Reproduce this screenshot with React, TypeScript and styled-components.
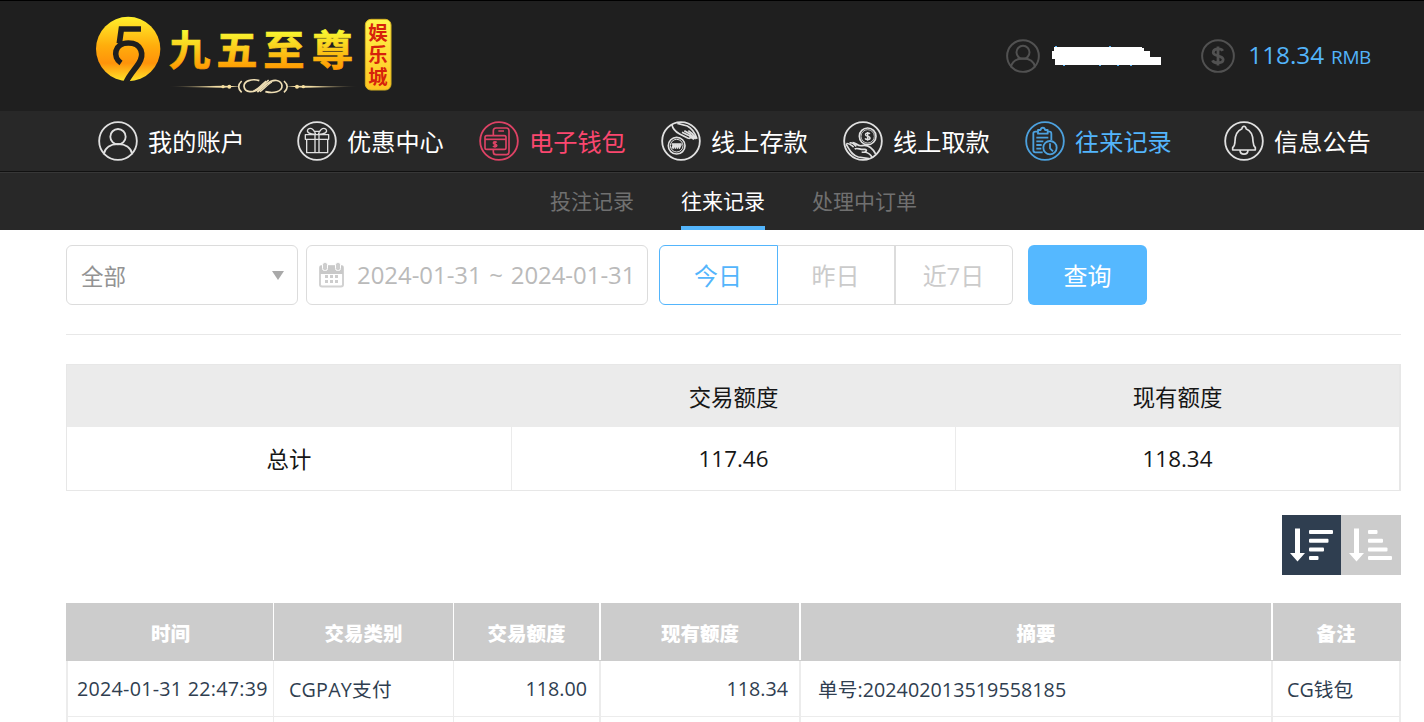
import React from "react";
import styled, { createGlobalStyle } from "styled-components";

const GlobalStyle = createGlobalStyle`
  * { box-sizing: border-box; }
  html, body { margin: 0; padding: 0; background: #fff; overflow: hidden; }
  body { font-family: "Open Sans", "Noto Sans CJK SC", sans-serif; color: #1c1c1c; }
  button { font-family: inherit; cursor: pointer; }
`;

const Page = styled.div`
  width: 1424px;
  height: 722px;
  overflow: hidden;
`;

const Header = styled.header`
  height: 111px;
  background: #1f1f1f;
  border-top: 1px solid #000;
  display: flex;
  justify-content: space-between;
  padding: 0 53px 0 80px;
`;

const LogoSvg = styled.svg`
  display: block;
  margin-top: -1px;
  flex: none;
`;

const Account = styled.div`
  display: flex;
  align-items: center;
  height: 110px;
`;

const AccountIcon = styled.svg`
  width: 34px;
  height: 34px;
  color: #515151;
  flex: none;
`;

const UserName = styled.svg`
  margin: 0 40px 0 12px;
  flex: none;
`;

const Balance = styled.div`
  margin-left: 13px;
  color: #53b4fa;
  font-size: 24.3px;
  line-height: 34px;
  white-space: nowrap;
`;

const Currency = styled.span`
  font-size: 19px;
  letter-spacing: -0.4px;
  margin-left: 7px;
`;

const MainNav = styled.nav`
  height: 60px;
  background: #282828;
  display: grid;
  grid-template-columns: 199px 182px 182px 182px 182px 199px auto;
  align-items: center;
  padding-left: 98px;
`;

const NavItem = styled.a<{ $color?: string }>`
  display: flex;
  align-items: center;
  gap: 10px;
  color: ${(p) => p.$color || "#fff"};
  font-size: 24.2px;
  line-height: 36px;
  white-space: nowrap;
`;

const NavLabel = styled.span`
  padding-top: 2px;
`;

const NavIconSvg = styled.svg`
  width: 40px;
  height: 40px;
  flex: none;
  opacity: 0.86;
`;

const SubNav = styled.nav`
  height: 59px;
  background: #282828;
  border-top: 1px solid #111;
  box-shadow: inset 0 1px 0 #373737;
  display: flex;
  gap: 47px;
  padding-left: 550px;
`;

const SubItem = styled.a<{ $active?: boolean }>`
  height: 58px;
  font-size: 21px;
  line-height: 59px;
  white-space: nowrap;
  color: ${(p) => (p.$active ? "#fff" : "#707070")};
  border-bottom: 4px solid ${(p) => (p.$active ? "#53b5fc" : "transparent")};
`;

const Content = styled.main`
  padding: 15px 23px 0 66px;
`;

const Filters = styled.div`
  display: flex;
  height: 90px;
  border-bottom: 1px solid #e8e8e8;
`;

const SelectBox = styled.div`
  width: 232px;
  height: 60px;
  border: 1px solid #dcdcdc;
  border-radius: 6px;
  display: flex;
  align-items: center;
  justify-content: space-between;
  padding: 0 13px 0 14px;
  font-size: 22.5px;
  color: #939393;
`;

const Caret = styled.i`
  border: 6px solid transparent;
  border-top: 9px solid #a9a9a9;
  border-bottom: 0;
`;

const DateBox = styled.div`
  width: 342px;
  height: 60px;
  margin-left: 8px;
  border: 1px solid #dcdcdc;
  border-radius: 6px;
  display: flex;
  align-items: center;
  padding: 0 0 1px 12px;
  gap: 13px;
  font-size: 23.9px;
  word-spacing: 1.5px;
  color: #bababa;
  white-space: nowrap;
`;

const RangeGroup = styled.div`
  display: flex;
  margin: 0 15px 0 11px;
`;

const RangeButton = styled.button<{ $active?: boolean; $w: number }>`
  width: ${(p) => p.$w}px;
  height: 60px;
  padding: 0 1px 1px 0;
  background: #fff;
  font-size: 24px;
  color: ${(p) => (p.$active ? "#53b5fc" : "#cbcbcb")};
  border: 1px solid ${(p) => (p.$active ? "#53b5fc" : "#dcdcdc")};
  border-left-width: ${(p) => (p.$active ? 1 : 0)}px;
  &:first-child { border-radius: 6px 0 0 6px; }
  &:nth-child(2) { border-right-width: 2px; }
  &:last-child { border-radius: 0 6px 6px 0; }
`;

const QueryButton = styled.button`
  width: 119px;
  height: 60px;
  padding: 0 0 1px;
  border: 0;
  border-radius: 6px;
  background: #55b8ff;
  color: #fff;
  font-size: 24px;
`;

const Summary = styled.section`
  margin-top: 29px;
  height: 127px;
  border: 1px solid #e7e7e7;
  border-right-width: 2px;
  font-size: 22.4px;
  color: #161616;
`;

const SummaryRow = styled.div<{ $head?: boolean }>`
  display: grid;
  grid-template-columns: 445px 444px 1fr;
  height: ${(p) => (p.$head ? 62 : 63)}px;
  background: ${(p) => (p.$head ? "#ebebeb" : "#fff")};
`;

const SummaryCell = styled.div`
  display: flex;
  align-items: center;
  justify-content: center;
  border-right: 1px solid #ebebeb;
  &:last-child { border-right: 0; }
`;

const SortBar = styled.div`
  display: flex;
  justify-content: flex-end;
  margin: 24px 0 28px;
`;

const SortButton = styled.button<{ $active?: boolean }>`
  width: ${(p) => (p.$active ? 59 : 60)}px;
  height: 60px;
  padding: 0;
  border: 0;
  background: ${(p) => (p.$active ? "#2f3e50" : "#ccc")};
  display: flex;
`;

const Records = styled.section`
  border-left: 2px solid #ececec;
  border-right: 2px solid #ececec;
`;

const recordColumns = "206px 180px 147px 200px 472px 1fr";

const RecordHead = styled.div`
  display: grid;
  grid-template-columns: ${recordColumns};
  height: 58px;
  margin: 0 -2px;
  padding: 0 2px;
  background: #ccc;
  color: #fff;
  font-size: 19.5px;
  font-weight: 900;
`;

const HeadCell = styled.div<{ $line?: number }>`
  display: flex;
  align-items: center;
  justify-content: center;
  padding: 1px 0 0;
  border-right: ${(p) => p.$line || 0}px solid #fff;
  height: 57px;
`;

const RecordRow = styled.div`
  display: grid;
  grid-template-columns: ${recordColumns};
  height: 56px;
  border-bottom: 1px solid #ececec;
  color: #2f3e50;
  font-size: 19.7px;
`;

const Cell = styled.div<{ $line?: number; $right?: boolean; $pad: number; $track?: number }>`
  display: flex;
  align-items: center;
  justify-content: ${(p) => (p.$right ? "flex-end" : "flex-start")};
  padding: ${(p) => (p.$right ? `0 ${p.$pad}px 1px 0` : `0 0 1px ${p.$pad}px`)};
  border-right: ${(p) => p.$line || 0}px solid #ececec;
  letter-spacing: ${(p) => p.$track || 0}px;
  white-space: nowrap;
`;

function Logo() {
  return (
    <LogoSvg width="330" height="110" viewBox="0 0 990 330">
      <defs>
        <linearGradient id="disc" x1="0" y1="0" x2="0" y2="1">
          <stop offset="0" stopColor="#fff02c" />
          <stop offset=".45" stopColor="#ffad0c" />
          <stop offset=".72" stopColor="#ff930a" />
          <stop offset="1" stopColor="#ffe52b" />
        </linearGradient>
        <linearGradient id="gold" x1="0" y1="85" x2="0" y2="210" gradientUnits="userSpaceOnUse">
          <stop offset="0" stopColor="#f7ff35" />
          <stop offset="1" stopColor="#ff9700" />
        </linearGradient>
        <linearGradient id="seal" x1="0" y1="0" x2="0" y2="1">
          <stop offset="0" stopColor="#fff64d" />
          <stop offset="1" stopColor="#ffc320" />
        </linearGradient>
        <linearGradient id="rule" x1="265" x2="835" y1="0" y2="0" gradientUnits="userSpaceOnUse">
          <stop offset="0" stopColor="#e9cf8c" stopOpacity="0" />
          <stop offset=".25" stopColor="#f2dda5" />
          <stop offset=".75" stopColor="#f2dda5" />
          <stop offset="1" stopColor="#e9cf8c" stopOpacity="0" />
        </linearGradient>
      </defs>
      <circle cx="144.500" cy="147" r="96.500" fill="url(#disc)" />
      <g fill="none" stroke="#1f1f1f">
        <path d="M183 87H124L118 130" strokeWidth="17" />
        <path d="M123 189C97 172 102 129 145 129C187 129 193 165 176 191C163 211 147 226 138 248" strokeWidth="17" />
      </g>
      <g fill="url(#gold)" fontFamily="'Noto Sans CJK SC', sans-serif" fontSize="124" fontWeight="700" stroke="url(#gold)" strokeWidth="2">
        <text x="267" y="195">九</text>
        <text x="409" y="195">五</text>
        <text x="550" y="195">至</text>
        <text x="695" y="195">尊</text>
      </g>
      <path d="M265 260 430 257 482 259 430 263ZM618 259 670 257 835 260 670 263Z" fill="url(#rule)" />
      <g fill="#f6df9f">
        <circle cx="429" cy="260" r="5" /><circle cx="448" cy="260" r="6" />
        <circle cx="651" cy="260" r="6" /><circle cx="670" cy="260" r="5" />
      </g>
      <g fill="none" stroke="#efdfb5" strokeWidth="5">
        <path d="M485 243Q467 260 485 277M612 243Q631 260 612 277" />
        <path d="M538 242C516 235 491 243 492 259C494 278 521 281 541 263L566 240" />
        <path d="M556 275C580 281 607 276 606 257C604 240 581 234 560 252L532 276" />
        <path d="M520 272C533 271 548 251 558 243M540 275C551 268 565 251 576 246" strokeWidth="4" />
      </g>
      <rect x="856" y="58" width="77" height="212" rx="17" fill="url(#seal)" stroke="#d7b322" strokeWidth="3" />
      <text fill="#d6220c" fontFamily="'Noto Sans CJK SC', sans-serif" fontSize="58" fontWeight="700">
        <tspan x="865" y="119">娱</tspan>
        <tspan x="865" y="187">乐</tspan>
        <tspan x="865" y="253">城</tspan>
      </text>
    </LogoSvg>
  );
}

const DOLLAR = "M12-13C8-20-12-20-12-9C-12 2 13-3 13 9C13 20-10 20-14 11M0-24V24";

const icons: Record<string, React.ReactNode> = {
  user: (
    <>
      <circle cx="60" cy="47" r="23" />
      <path d="M17 100C21 79 39 69 60 69S99 79 103 100" />
    </>
  ),
  gift: (
    <g strokeWidth="4">
      <path d="M25 41H95V55H25ZM29 55V95H92V55M54 41V95M66 41V95" />
      <path d="M56 40C37 40 27 33 33 25C43 17 54 29 56 40ZM64 40C83 40 93 33 87 25C77 17 66 29 64 40ZM50 31H70" />
    </g>
  ),
  wallet: (
    <g strokeWidth="5">
      <path d="M43 43V29Q43 21 51 21H82Q90 21 90 29V93Q90 101 82 101H51Q43 101 43 93V86M58 30H75" />
      <rect x="18" y="44" width="63" height="41" rx="5" />
      <path d="M18 55H81" />
      <path d={DOLLAR} transform="translate(48 70) scale(.42)" strokeWidth="11" />
    </g>
  ),
  deposit: (
    <g strokeWidth="5">
      <circle cx="47" cy="74" r="25" />
      <circle cx="47" cy="74" r="19" strokeWidth="3" />
      <path d="M33 82 37 69V82L43 69V82L49 69V82L55 69V82L61 70M32 69H62" strokeWidth="4" />
      <path d="M32 9C35 23 42 32 56 39L80 51C91 55 91 45 80 42L63 34M49 7 79 15C95 23 103 39 108 53M70 29 87 39 101 54M82 29 94 38 106 54M88 48 99 55" />
    </g>
  ),
  withdraw: (
    <g strokeWidth="5">
      <circle cx="74" cy="46" r="25" />
      <circle cx="74" cy="46" r="20" strokeWidth="2.500" />
      <path d={DOLLAR} transform="translate(74 46) scale(.55)" strokeWidth="8" />
      <path d="M9 70C20 85 24 102 46 108L78 113M10 68C18 65 24 72 32 78M20 66C26 62 34 70 40 76M29 65C38 64 44 77 57 74C78 70 92 88 98 99M35 84C43 79 52 87 65 85C75 86 70 96 56 93M66 93C78 96 84 102 87 109" />
    </g>
  ),
  records: (
    <g strokeWidth="5.500">
      <path d="M53 94H31Q25 94 25 88V37Q25 32 31 32H38M67 32H74Q79 32 79 38V57" />
      <path d="M39 38V27H47C48 18 59 18 60 27H68V38ZM34 50H70M34 61H55M34 72H50M34 83H49" />
      <circle cx="75" cy="80" r="20" />
      <path d="M75 67V82L84 91" />
    </g>
  ),
  bell: (
    <g strokeWidth="5">
      <path d="M54 23C53 14 67 14 66 23C81 29 87 42 87 61Q88 74 94 80V87H26V80Q33 74 33 61C33 42 40 29 54 23ZM48 88C49 103 71 103 72 88" />
    </g>
  ),
};

function NavIcon({ name }: { name: string }) {
  return (
    <NavIconSvg viewBox="0 0 120 120" fill="none" stroke="currentColor" strokeWidth="5.500" strokeLinejoin="round">
      <circle cx="60" cy="60" r="56.500" />
      {icons[name]}
    </NavIconSvg>
  );
}

function CalendarIcon() {
  return (
    <svg width="25" height="26" viewBox="0 0 25 26">
      <rect x="1" y="4" width="23" height="20.500" rx="2" fill="#fff" stroke="#d2d2d2" strokeWidth="2" />
      <path d="M1 4H24V12H1Z" fill="#c9c9c9" />
      <g fill="#cecece" stroke="#fff">
        <rect x="3.500" y=".5" width="5" height="8" rx="2" />
        <rect x="16.500" y=".5" width="5" height="8" rx="2" />
      </g>
      <path d="M6 14.500H9M11 14.500H14M16 14.500H19M6 19.500H9M11 19.500H14M16 19.500H19" stroke="#cdcdcd" strokeWidth="3" />
    </svg>
  );
}

function SortIcon({ widths }: { widths: number[] }) {
  return (
    <svg width="59" height="60" viewBox="0 0 59 60" fill="#fff">
      <path d="M13 13.500H18V38H23L15.500 46.500 8 38H13Z" />
      {widths.map((w, i) => (
        <rect key={i} x="27" y={15 + i * 8.700} width={w} height="4" rx="1" />
      ))}
    </svg>
  );
}

const navItems = [
  { icon: "user", label: "我的账户" },
  { icon: "gift", label: "优惠中心" },
  { icon: "wallet", label: "电子钱包", color: "#fb476f" },
  { icon: "deposit", label: "线上存款" },
  { icon: "withdraw", label: "线上取款" },
  { icon: "records", label: "往来记录", color: "#53b5fc" },
  { icon: "bell", label: "信息公告" },
];

const headings = [
  { label: "时间", line: 1 },
  { label: "交易类别", line: 1 },
  { label: "交易额度", line: 2 },
  { label: "现有额度", line: 2 },
  { label: "摘要", line: 2 },
  { label: "备注" },
];

export default function App() {
  return (
    <Page>
      <GlobalStyle />
      <Header>
        <Logo />
        <Account>
          <AccountIcon viewBox="0 0 120 120" fill="none" stroke="currentColor" strokeWidth="7">
            <circle cx="60" cy="60" r="56" />
            {icons.user}
          </AccountIcon>
          <UserName width="109" height="22" viewBox="0 0 109 22">
            <path d="M3 1H5V20H3ZM57 1H59V4H57ZM11 19H13V21H11ZM47 19H49V21H47ZM65 19H67V21H65ZM78 19H80V21H78Z" fill="#53b4fa" />
            <path d="M2 2H90V3H92V6H98V12H109V20H3V14H0V6H2Z" fill="#fff" />
          </UserName>
          <AccountIcon viewBox="0 0 120 120" fill="none" stroke="currentColor" strokeWidth="7">
            <circle cx="60" cy="60" r="56" />
            <path d={DOLLAR} transform="translate(60 60) scale(1.4)" />
          </AccountIcon>
          <Balance>118.34<Currency>RMB</Currency></Balance>
        </Account>
      </Header>
      <MainNav>
        {navItems.map((n) => (
          <NavItem key={n.icon} $color={n.color}>
            <NavIcon name={n.icon} />
            <NavLabel>{n.label}</NavLabel>
          </NavItem>
        ))}
      </MainNav>
      <SubNav>
        <SubItem>投注记录</SubItem>
        <SubItem $active>往来记录</SubItem>
        <SubItem>处理中订单</SubItem>
      </SubNav>
      <Content>
        <Filters>
          <SelectBox>全部<Caret /></SelectBox>
          <DateBox><CalendarIcon />2024-01-31 ~ 2024-01-31</DateBox>
          <RangeGroup>
            <RangeButton $w={119} $active>今日</RangeButton>
            <RangeButton $w={118}>昨日</RangeButton>
            <RangeButton $w={117}>近7日</RangeButton>
          </RangeGroup>
          <QueryButton>查询</QueryButton>
        </Filters>
        <Summary>
          <SummaryRow $head>
            <SummaryCell />
            <SummaryCell>交易额度</SummaryCell>
            <SummaryCell>现有额度</SummaryCell>
          </SummaryRow>
          <SummaryRow>
            <SummaryCell>总计</SummaryCell>
            <SummaryCell>117.46</SummaryCell>
            <SummaryCell>118.34</SummaryCell>
          </SummaryRow>
        </Summary>
        <SortBar>
          <SortButton $active><SortIcon widths={[24, 19.500, 15, 9.500]} /></SortButton>
          <SortButton><SortIcon widths={[9.500, 15, 19.500, 24]} /></SortButton>
        </SortBar>
        <Records>
          <RecordHead>
            {headings.map((h) => (
              <HeadCell key={h.label} $line={h.line}>{h.label}</HeadCell>
            ))}
          </RecordHead>
          <RecordRow>
            <Cell $line={1} $pad={9} $track={0.26}>2024-01-31 22:47:39</Cell>
            <Cell $line={1} $pad={15} $track={0.2}>CGPAY支付</Cell>
            <Cell $line={2} $pad={12} $right>118.00</Cell>
            <Cell $line={2} $pad={11} $right>118.34</Cell>
            <Cell $line={2} $pad={17} $track={0.05}>单号:202402013519558185</Cell>
            <Cell $pad={14}>CG钱包</Cell>
          </RecordRow>
          <RecordRow>
            <Cell $line={1} $pad={0} />
            <Cell $line={1} $pad={0} />
            <Cell $line={2} $pad={0} />
            <Cell $line={2} $pad={0} />
            <Cell $line={2} $pad={0} />
            <Cell $pad={0} />
          </RecordRow>
        </Records>
      </Content>
    </Page>
  );
}
